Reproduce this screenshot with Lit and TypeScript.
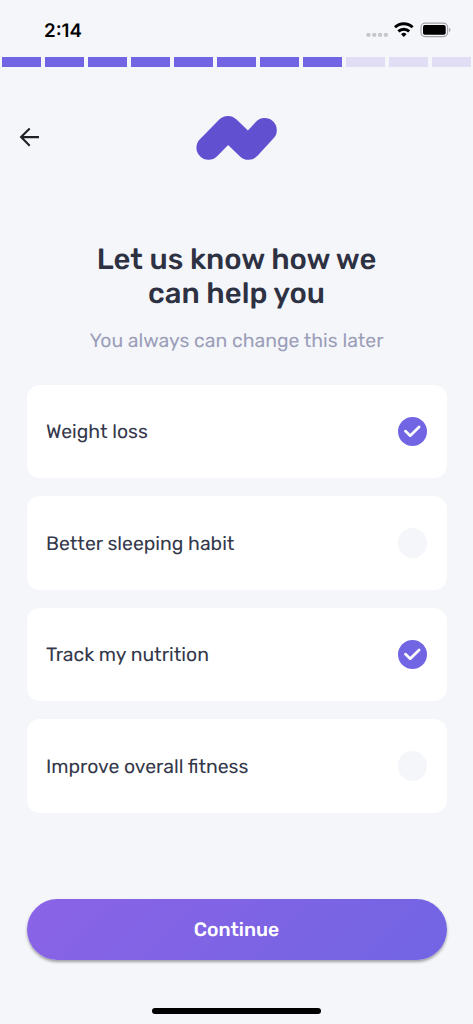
import { LitElement, html, css, svg } from "lit";
import { customElement, state } from "lit/decorators.js";
import { classMap } from "lit/directives/class-map.js";

interface Goal {
  label: string;
  selected: boolean;
}

@customElement("app-root")
export class AppRoot extends LitElement {
  @state() private goals: Goal[] = [
    { label: "Weight loss", selected: true },
    { label: "Better sleeping habit", selected: false },
    { label: "Track my nutrition", selected: true },
    { label: "Improve overall fitness", selected: false },
  ];

  static styles = css`
    :host {
      display: flex;
      flex-direction: column;
      box-sizing: border-box;
      width: 473px;
      height: 1024px;
      overflow: hidden;
      background: #f4f6fa;
      color: #2d3142;
      font-family: Rubik, Roboto, sans-serif;
      text-rendering: geometricPrecision;
    }
    svg { display: block; }
    .status {
      display: flex;
      justify-content: space-between;
      height: 57px;
      padding: 0 21px 0 44px;
    }
    .time {
      padding-top: 19px;
      font: 600 18.7px/23px Inter, sans-serif;
      color: #000;
    }
    .progress {
      display: flex;
      gap: 4.4px;
      height: 10px;
      padding: 0 2.2px;
    }
    .seg { flex: 1; background: #e1ddf4; }
    .seg.done { background: #7165e3; }
    .header {
      display: grid;
      grid-template-columns: 60px 1fr 60px;
      height: 173px;
    }
    .back {
      all: unset;
      height: 24px;
      padding: 58px 0 0 17px;
      cursor: pointer;
    }
    .logo { justify-self: center; padding-top: 43px; }
    h1 {
      margin: 0;
      padding-top: 3px;
      text-align: center;
      font-weight: 500;
      font-size: 29.25px;
      line-height: 34px;
    }
    h1 span { display: block; }
    .sub {
      margin: 18px 0 0;
      text-align: center;
      font-size: 19.4px;
      line-height: 24px;
      color: #9c9eb9;
    }
    .goals {
      display: flex;
      flex-direction: column;
      gap: 18px;
      padding: 31.5px 26.5px 0;
    }
    .goal {
      display: flex;
      align-items: center;
      justify-content: space-between;
      box-sizing: border-box;
      height: 93.6px;
      padding: 0 19.5px;
      border-radius: 13px;
      background: #fff;
      font-size: 19.4px;
      line-height: 24px;
      cursor: pointer;
    }
    .label { padding-top: 1.4px; color: #34384b; }
    .check {
      width: 29.4px;
      height: 29.4px;
      border-radius: 50%;
      background: #f4f6fa;
    }
    .check.on { background: #7165e3; }
    .cta {
      margin: 86px 26.5px 0;
      height: 61px;
      border: 0;
      border-radius: 31px;
      background: linear-gradient(135deg, #8b63e6, #7165e3);
      box-shadow: 0 2px 3px rgba(0, 0, 0, 0.36);
      color: #fff;
      font: 500 19.4px/61px Rubik, Roboto, sans-serif;
      text-align: center;
      text-rendering: geometricPrecision;
      padding: 0;
      cursor: pointer;
    }
    .home {
      width: 169px;
      height: 6px;
      margin: 48px auto 0;
      border-radius: 3px;
      background: #000;
    }
  `;

  private toggle(goal: Goal) {
    this.goals = this.goals.map((g) =>
      g === goal ? { ...g, selected: !g.selected } : g
    );
  }

  render() {
    return html`
      <div class="status">
        <div class="time">2:14</div>
        <svg width="88" height="57" viewBox="364 0 88 57">
          ${[368.4, 374.2, 380, 385.8].map(
            (x) => svg`<rect x=${x - 1.9} y="32.9" width="3.9" height="3.9" rx="1.3" fill="#c5c6cb"/>`
          )}
          <g fill="none" stroke="#000" stroke-width="2.9">
            <path d="M395 27.3a12.6 12.6 0 0 1 17.6 0"/>
            <path d="M398.4 31.4a7.7 7.7 0 0 1 10.8 0"/>
          </g>
          <path d="M403.8 37l-2.7-2.8a3.8 3.8 0 0 1 5.4 0z"/>
          <rect x="421" y="23.2" width="26.6" height="13.4" rx="4" fill="none" stroke="#a2a3a7" stroke-width="1.2"/>
          <rect x="423" y="25.1" width="22.7" height="9.7" rx="1.8"/>
          <path d="M449.2 27.8v4.3c1.8-.7 1.8-3.6 0-4.3z" fill="#a2a3a7"/>
        </svg>
      </div>
      <div class="progress">
        ${Array.from({ length: 11 }, (_, i) => html`<div class=${classMap({ seg: true, done: i < 8 })}></div>`)}
      </div>
      <div class="header">
        <button class="back" aria-label="Back">
          <svg width="24" height="24" viewBox="0 0 24 24" fill="none" stroke="#202124" stroke-width="2.1">
            <path d="M22 12.1H4.2M12.7 3.5L4.1 12.1l8.6 8.6"/>
          </svg>
        </button>
        <svg class="logo" width="90" height="60" viewBox="192 110 90 60">
          <path d="M208.5 147.7L227.9 128.1L248.4 147.7L264.7 130.1" fill="none" stroke="#6150cf"
            stroke-width="24.2" stroke-linecap="round" stroke-linejoin="round"/>
        </svg>
      </div>
      <h1><span>Let us know how we</span><span>can help you</span></h1>
      <p class="sub">You always can change this later</p>
      <div class="goals">
        ${this.goals.map(
          (g) => html`
            <div class="goal" @click=${() => this.toggle(g)}>
              <span class="label">${g.label}</span>
              <div class=${classMap({ check: true, on: g.selected })}>
                ${g.selected
                  ? html`<svg width="29.4" height="29.4" viewBox="0 0 29.4 29.4" fill="none" stroke="#fff"
                      stroke-width="2.7" stroke-linecap="round" stroke-linejoin="round">
                      <path d="M7.4 14.1l4.8 4.6 8.9-8.7"/>
                    </svg>`
                  : null}
              </div>
            </div>
          `
        )}
      </div>
      <button class="cta">Continue</button>
      <div class="home"></div>
    `;
  }
}
